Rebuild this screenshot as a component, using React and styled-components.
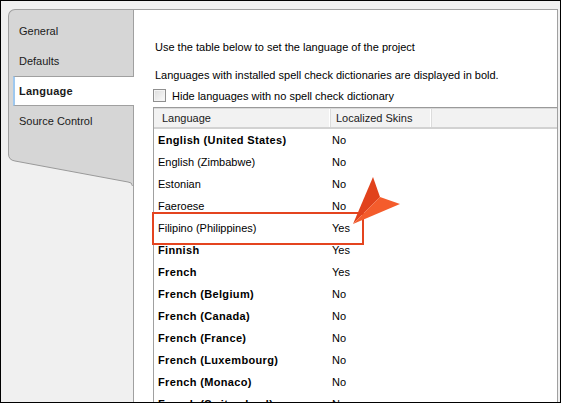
import React from "react";
import styled, { createGlobalStyle } from "styled-components";

const Global = createGlobalStyle`
  html, body { margin: 0; padding: 0; background: #fff; }
  * { box-sizing: border-box; }
`;

const Frame = styled.div`
  position: relative;
  width: 561px;
  height: 403px;
  border: 1px solid #000;
  background: #f0f0f0;
  padding: 8px 2px 0 7px;
  display: flex;
  overflow: hidden;
  font-family: "Liberation Sans", Arial, sans-serif;
  font-size: 11px;
  color: #000;
`;

const Sidebar = styled.div`
  width: 125px;
  flex-shrink: 0;
  display: flex;
  flex-direction: column;
`;

const TabPanel = styled.div`
  border-top: 1px solid #a0a0a0;
  border-left: 1px solid #a0a0a0;
  border-top-left-radius: 7px;
  background: #d6d6d6;
  padding: 6px 0 18px 4px;
  display: flex;
  flex-direction: column;
`;

const Tab = styled.div`
  position: relative;
  z-index: 1;
  height: 30px;
  margin-right: -1px;
  display: flex;
  align-items: center;
  padding-left: 4px;
  border-left: 2px solid ${(p) => (p.$active ? "#9ec8ef" : "transparent")};
  border-top: 1px solid ${(p) => (p.$active ? "#a0a0a0" : "transparent")};
  border-bottom: 1px solid ${(p) => (p.$active ? "#a0a0a0" : "transparent")};
  background: ${(p) => (p.$active ? "#fff" : "transparent")};
  font-weight: ${(p) => (p.$active ? 700 : 400)};
  letter-spacing: ${(p) => (p.$active ? "0.25px" : "0")};
  color: #1a1a1a;
`;

const Content = styled.div`
  flex: 1;
  background: #fff;
  border: 1px solid #a0a0a0;
  border-bottom: none;
  padding: 30px 0 0 19px;
  display: flex;
  flex-direction: column;
  overflow: hidden;
`;

const Para = styled.div`
  line-height: 14px;
  padding-left: 2px;
  margin-top: ${(p) => p.$mt || 0}px;
  white-space: nowrap;
`;

const CheckRow = styled.label`
  display: flex;
  align-items: center;
  gap: 6px;
  height: 13px;
  margin-top: 7px;
  white-space: nowrap;
`;

const Box = styled.span`
  width: 13px;
  height: 13px;
  border: 1px solid #8f8f8f;
  background: linear-gradient(135deg, #dcdcdc, #fbfbfb);
  box-shadow: inset 0 0 0 1px #f4f4f4;
  flex-shrink: 0;
`;

const Table = styled.div`
  margin-top: 5px;
  border-top: 1px solid #9a9a9a;
  border-left: 1px solid #a0a0a0;
  flex: 1;
`;

const Header = styled.div`
  display: grid;
  grid-template-columns: 177px 101px 1fr;
  height: 21px;
  background: #f2f2f2;
  border-top: 1px solid #dadada;
  border-bottom: 2px solid #d2d2d2;
`;

const HeadCell = styled.div`
  display: flex;
  align-items: center;
  padding-left: ${(p) => p.$pl}px;
  border-right: 1px solid #dcdcdc;
  box-shadow: inset -1px 0 0 #fff;
  white-space: nowrap;
  color: #1a1a1a;
`;

const Row = styled.div`
  display: grid;
  grid-template-columns: 177px 1fr;
  height: 22px;
  align-items: center;
  white-space: nowrap;
`;

const Cell = styled.div`
  padding-left: ${(p) => p.$pl}px;
  font-weight: ${(p) => (p.$bold ? 700 : 400)};
  letter-spacing: ${(p) => (p.$bold ? "0.35px" : "0")};
`;

const Highlight = styled.div`
  position: absolute;
  left: 151px;
  top: 211px;
  width: 212px;
  height: 33px;
  border: 2px solid #e4441f;
  pointer-events: none;
`;

const Pointer = styled.svg`
  position: absolute;
  left: 340px;
  top: 170px;
`;

const rows = [
  ["English (United States)", "No", true],
  ["English (Zimbabwe)", "No", false],
  ["Estonian", "No", false],
  ["Faeroese", "No", false],
  ["Filipino (Philippines)", "Yes", false],
  ["Finnish", "Yes", true],
  ["French", "Yes", true],
  ["French (Belgium)", "No", true],
  ["French (Canada)", "No", true],
  ["French (France)", "No", true],
  ["French (Luxembourg)", "No", true],
  ["French (Monaco)", "No", true],
  ["French (Switzerland)", "No", true],
];

export default function App() {
  return (
    <>
      <Global />
      <Frame>
        <Sidebar>
          <TabPanel>
            <Tab>General</Tab>
            <Tab>Defaults</Tab>
            <Tab $active>Language</Tab>
            <Tab>Source Control</Tab>
          </TabPanel>
          <svg width="125" height="32" viewBox="0 0 125 32">
            <path
              d="M0,0 H125 V32 Q124,28 120,28 L7,7 Q0.5,6 0.5,0 Z"
              fill="#d6d6d6"
            />
            <path
              d="M0.5,-1 V0 Q0.5,6 7,7 L120,28 Q124,28 124.5,32"
              fill="none"
              stroke="#9a9a9a"
              strokeWidth="1"
            />
          </svg>
        </Sidebar>
        <Content>
          <Para>Use the table below to set the language of the project</Para>
          <Para $mt={14}>
            Languages with installed spell check dictionaries are displayed in bold.
          </Para>
          <CheckRow>
            <Box />
            Hide languages with no spell check dictionary
          </CheckRow>
          <Table>
            <Header>
              <HeadCell $pl={8}>Language</HeadCell>
              <HeadCell $pl={5}>Localized Skins</HeadCell>
              <div />
            </Header>
            {rows.map(([lang, skin, bold]) => (
              <Row key={lang}>
                <Cell $pl={4} $bold={bold}>{lang}</Cell>
                <Cell $pl={1}>{skin}</Cell>
              </Row>
            ))}
          </Table>
        </Content>
        <Highlight />
        <Pointer width="70" height="60" viewBox="0 0 70 60">
          <path d="M12,53 L32,6 L39,26 Z" fill="#e1421c" />
          <path d="M12,53 L39,26 L59,33 Z" fill="#f45c2c" />
        </Pointer>
      </Frame>
    </>
  );
}
